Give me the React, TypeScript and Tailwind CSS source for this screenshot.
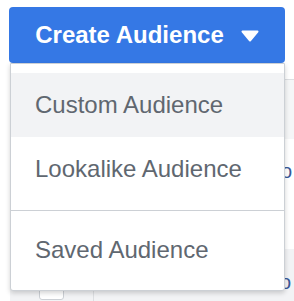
import React from "react";

export default function App() {
  return (
    <div className="relative w-[294px] h-[301px] overflow-hidden bg-white font-['Liberation_Sans',Arial,sans-serif]">
      <div className="pt-[7px] pl-[9px]">
        <button className="flex h-[56px] w-[276px] items-center justify-center gap-[17px] rounded-[4px] bg-[#3578e5] text-[24px] font-bold leading-none text-white">
          <span>Create Audience</span>
          <svg width="18" height="12" viewBox="0 0 18 12" className="mt-[1px]">
            <path d="M1.5 1.5 H16.5 L9 10.5 Z" fill="white" stroke="white" strokeWidth="2" strokeLinejoin="round" />
          </svg>
        </button>
      </div>

      {/* background table peeking out */}
      <div className="ml-[10px] flex flex-col text-[20px] leading-[24px] text-[#385898]">
        <div className="h-[17px] border-b border-[#dddfe2] bg-white" />
        <div className="h-[59px] bg-[#f5f6f7]" />
        <div className="h-[110px] bg-white pl-[271px] pt-[20px]">o</div>
        <div className="flex h-[60px] items-start bg-[#f2f3f5]">
          <div className="h-[60px] w-[84px] border-r border-[#dddfe2] pl-[29px] pt-[27px]">
            <div className="h-[24px] w-[25px] rounded-[3px] border border-[#ccd0d5] bg-white" />
          </div>
          <div className="pl-[186px] pt-[21px]">o</div>
        </div>
      </div>

      {/* dropdown menu */}
      <div className="absolute left-[10px] top-[63px] z-10 w-[275px] rounded-b-[3px] border border-[#ccd0d5] bg-white pt-[9px] pb-[8px] text-[24px] text-[#606770] shadow-[0_2px_5px_rgba(0,0,0,0.18)]">
        <div className="flex h-[64px] items-center bg-[#f2f3f5] pl-[24px]">Custom Audience</div>
        <div className="flex h-[64px] items-center pl-[24px]">Lookalike Audience</div>
        <div className="mt-[9px] mb-[7px] h-px bg-[#ccd0d5]" />
        <div className="flex h-[64px] items-center pl-[24px]">Saved Audience</div>
      </div>
    </div>
  );
}
